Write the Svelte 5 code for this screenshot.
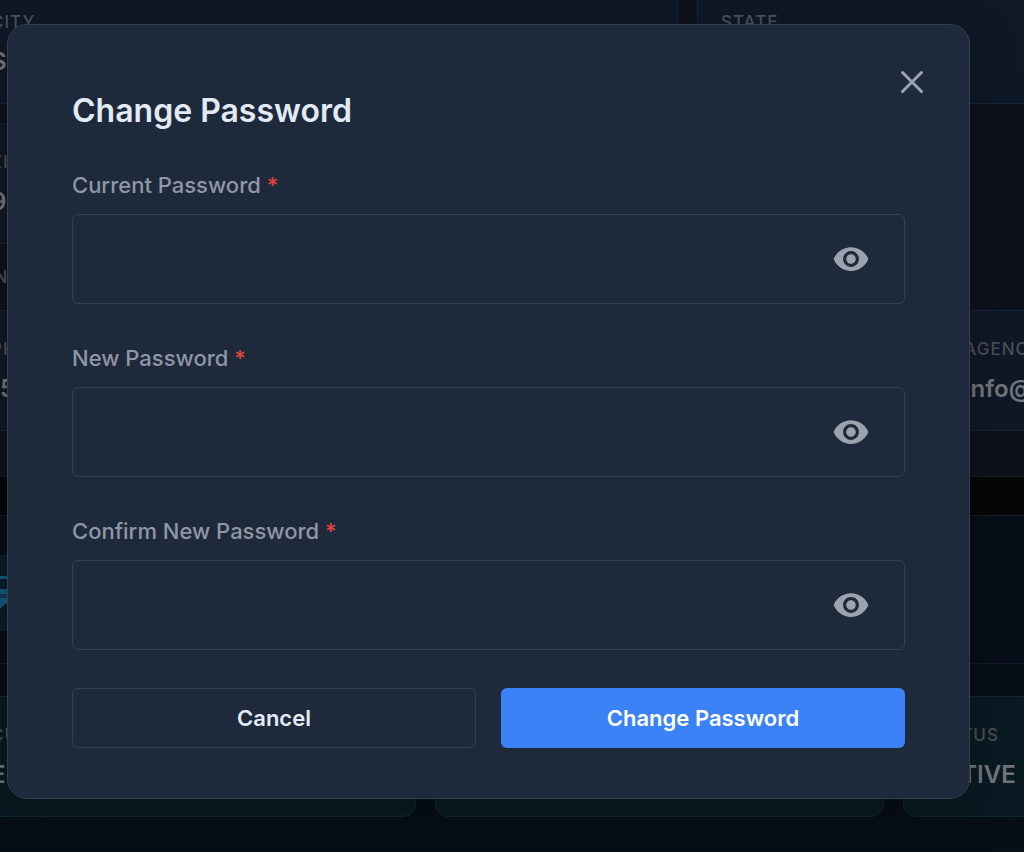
<script>
	let current = $state("");
	let next = $state("");
	let confirmed = $state("");
	let visible = $state({ current: false, next: false, confirmed: false });
	let open = $state(true);

	function close() {
		open = false;
	}

	function submit(event) {
		event.preventDefault();
	}
</script>

{#snippet card(label, value)}
	<article class="card">
		<h4>{label}</h4>
		<p>{value}</p>
	</article>
{/snippet}

{#snippet eye(key)}
	<button
		class="eye"
		type="button"
		aria-label="Toggle visibility"
		aria-pressed={visible[key]}
		onclick={() => (visible[key] = !visible[key])}
	>
		<svg viewBox="0 0 24 24" aria-hidden="true">
			<path
				d="M12 4.5C7 4.5 2.73 7.61 1 12c1.73 4.39 6 7.5 11 7.5s9.27-3.11 11-7.5c-1.73-4.39-6-7.5-11-7.5zM12 17c-2.76 0-5-2.24-5-5s2.24-5 5-5 5 2.24 5 5-2.24 5-5 5zm0-8c-1.66 0-3 1.34-3 3s1.34 3 3 3 3-1.34 3-3-1.34-3-3-3z"
			/>
		</svg>
	</button>
{/snippet}

<main>
	<section class="contact">
		<div class="grid two">
			{@render card("CITY", "S")}
			{@render card("STATE", "")}
		</div>
		<div class="grid two">
			{@render card("ZI", "9")}
		</div>
		<h3>CON</h3>
		<div class="grid three">
			{@render card("PH", "(5")}
			<div></div>
			{@render card("AGENCY", "info@")}
		</div>
	</section>

	<section class="account">
		<header>
			<span class="badge">
				<svg viewBox="0 0 38 38" aria-hidden="true">
					<path d="M2 2h34v3H2zM2 15h34v5H2zM2 24h22l-3 5-9 7H2z" />
					<path class="dim" d="M2 20h34v4H2z" />
				</svg>
			</span>
		</header>
		<div class="grid three">
			{@render card("CU", "E")}
			{@render card("", "")}
			{@render card("STATUS", "ACTIVE")}
		</div>
	</section>
</main>

{#if open}
	<div class="overlay">
		<div class="modal" role="dialog" aria-modal="true" aria-labelledby="title">
			<button class="close" type="button" aria-label="Close" onclick={close}>
				<svg viewBox="0 0 24 24" aria-hidden="true">
					<path d="M2.5 2.5l19 19M21.5 2.5l-19 19" />
				</svg>
			</button>
			<h2 id="title">Change Password</h2>
			<form onsubmit={submit}>
				<div class="field">
					<label for="current">Current Password <em>*</em></label>
					<div class="box">
						<input id="current" type={visible.current ? "text" : "password"} bind:value={current} />
						{@render eye("current")}
					</div>
				</div>
				<div class="field">
					<label for="next">New Password <em>*</em></label>
					<div class="box">
						<input id="next" type={visible.next ? "text" : "password"} bind:value={next} />
						{@render eye("next")}
					</div>
				</div>
				<div class="field">
					<label for="confirmed">Confirm New Password <em>*</em></label>
					<div class="box">
						<input id="confirmed" type={visible.confirmed ? "text" : "password"} bind:value={confirmed} />
						{@render eye("confirmed")}
					</div>
				</div>
				<div class="actions">
					<button class="cancel" type="button" onclick={close}>Cancel</button>
					<button class="primary" type="submit">Change Password</button>
				</div>
			</form>
		</div>
	</div>
{/if}

<style>
	:global(body) {
		background: #050608;
		font-family: Inter, sans-serif;
	}

	h2,
	h3,
	h4,
	p {
		margin: 0;
	}

	main {
		height: 100vh;
		overflow: hidden;
	}

	/* the page behind is wider than the window and is clipped on both sides */
	.contact {
		display: flex;
		flex-direction: column;
		margin: 0 -417px 0 -66px;
		padding: 0 33px 45px;
		background: #0e121b;
		border-bottom: 1px solid #191d24;
	}

	.contact .grid + .grid {
		margin-top: 19px;
	}

	.grid {
		display: grid;
		gap: 19px;
	}

	.two {
		grid-template-columns: 1fr 1fr;
	}

	.three {
		grid-template-columns: 1fr 1fr 1fr;
	}

	.card {
		box-sizing: border-box;
		height: 121px;
		padding: 24px 23px;
		background: #0f1827;
		border: 1px solid #14243a;
		border-radius: 13px;
	}

	.contact .grid:first-child .card {
		margin-top: -17px;
	}

	.card h4,
	h3 {
		color: #4b4f57;
		font-size: 17px;
		font-weight: 500;
		letter-spacing: 1px;
		line-height: 28px;
	}

	.card p {
		margin-top: 10px;
		color: #72767b;
		font-size: 24px;
		font-weight: 600;
		line-height: 32px;
	}

	h3 {
		margin: 19px 0;
	}

	.account {
		margin: 38px -361px 0 -66px;
		padding: 0 33px 40px;
		background: #070e17;
		border-top: 1px solid #12202a;
	}

	.account header {
		margin: 0 -33px 32px;
		padding: 39px 33px 32px;
		border-bottom: 1px solid #101b2a;
	}

	.badge {
		display: flex;
		align-items: center;
		justify-content: center;
		width: 76px;
		height: 76px;
		background: #0a1d28;
		border-radius: 16px;
	}

	.badge svg {
		width: 38px;
		fill: #15597b;
	}

	.badge .dim {
		fill: #0e3b53;
	}

	.account .card {
		background: #0a1a22;
		border-color: #12272f;
	}

	.overlay {
		position: absolute;
		inset: 0;
		padding: 24px 54px 53px 7px;
	}

	.modal {
		position: relative;
		padding: 64px 64px 50px;
		background: #1e293b;
		border: 1px solid #343e4e;
		border-radius: 20px;
		box-shadow: 0 16px 48px rgba(0, 0, 0, 0.25);
	}

	button {
		padding: 0;
		background: none;
		border: 0;
		font-family: inherit;
		cursor: pointer;
	}

	.close {
		position: absolute;
		top: 35px;
		right: 35px;
		display: grid;
		place-items: center;
		width: 44px;
		height: 44px;
	}

	.close svg {
		width: 24px;
		fill: none;
		stroke: #9ca3af;
		stroke-width: 3;
		stroke-linecap: round;
	}

	h2 {
		color: #e2ebf5;
		font-size: 32px;
		font-weight: 600;
		line-height: 44px;
	}

	form {
		display: flex;
		flex-direction: column;
		gap: 38px;
		margin-top: 36px;
	}

	.field {
		display: flex;
		flex-direction: column;
		gap: 13px;
	}

	label {
		color: #8f97a5;
		font-size: 22px;
		font-weight: 500;
		line-height: 32px;
	}

	label em {
		color: #e04438;
		font-style: normal;
	}

	.box {
		display: flex;
		align-items: center;
		box-sizing: border-box;
		height: 90px;
		padding-right: 34px;
		border: 1px solid #344052;
		border-radius: 6px;
	}

	input {
		flex: 1;
		min-width: 0;
		height: 100%;
		box-sizing: border-box;
		padding: 0 24px;
		background: none;
		border: 0;
		outline: 0;
		color: #e2ebf5;
		font-family: inherit;
		font-size: 22px;
	}

	.eye svg {
		display: block;
		width: 38px;
		fill: #9ca3af;
	}

	.actions {
		display: grid;
		grid-template-columns: 1fr 1fr;
		gap: 25px;
	}

	.actions button {
		height: 60px;
		border-radius: 6px;
		font-size: 22px;
		font-weight: 600;
	}

	.actions .cancel {
		border: 1px solid #344052;
		color: #e2ebf5;
	}

	.actions .primary {
		background: #3b82f6;
		color: #fff;
	}
</style>
